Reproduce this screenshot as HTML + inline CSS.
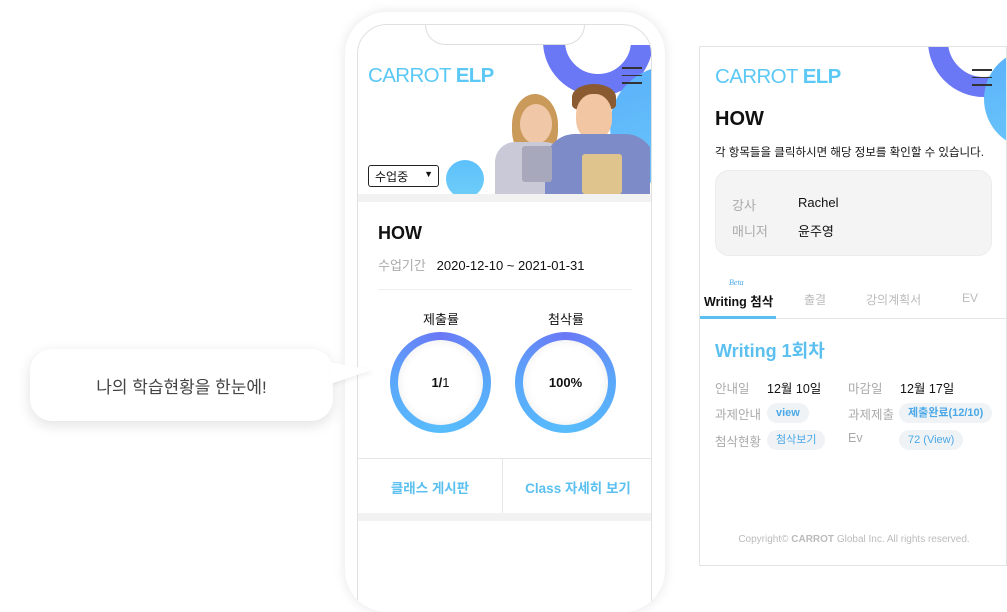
<!DOCTYPE html>
<html><head><meta charset="utf-8"><style>
*{margin:0;padding:0;box-sizing:border-box}
body{width:1007px;height:563px;overflow:hidden;background:#fff;position:relative;font-family:"Liberation Sans","Noto Sans CJK KR",sans-serif;color:#111}
.abs{position:absolute}
.logo{font-size:20.5px;color:#5bc8f5;letter-spacing:-0.6px;white-space:nowrap}
.logo b{font-weight:700}
.ham span{display:block;width:20px;height:1.5px;background:#333;margin-bottom:6px}
.ring{border-radius:50%;background:conic-gradient(#6a78f6,#5aa8fb 25%,#58bdfc 50%,#5aa8fb 75%,#6a78f6)}
.pill{display:inline-block;background:#f0f3f6;border-radius:10px;padding:2px 9px;color:#4aa8e8;font-size:11px;font-weight:700}
.lab{color:#aaa;font-size:12.5px}
</style></head><body>

<div class="abs" style="left:30px;top:349px;width:303px;height:72px;background:#fff;border-radius:22px;box-shadow:0 4px 14px rgba(0,0,0,0.12);z-index:3;display:flex;align-items:center;justify-content:center;font-size:17px;color:#444">나의 학습현황을 한눈에!</div>
<div class="abs" style="left:330px;top:362px;width:0;height:0;border-top:8px solid transparent;border-bottom:14px solid transparent;border-left:42px solid #fff;z-index:4;filter:drop-shadow(2px 2px 2px rgba(0,0,0,0.06))"></div>

<div class="abs" style="left:345px;top:12px;width:320px;height:600px;background:#fff;border-radius:42px;box-shadow:0 0 12px rgba(0,0,0,0.1);overflow:hidden">
  <div class="abs" style="left:12px;top:12px;width:295px;height:600px;border:1px solid #e0e0e0;border-radius:30px 30px 0 0;overflow:hidden;background:#fff">
    <div class="abs" style="left:0;top:20px;width:295px;height:149px;overflow:hidden">
      <div class="abs" style="left:185px;top:-59px;width:110px;height:110px;border-radius:50%;border:22px solid #6a78f6"></div>
      <div class="abs" style="left:252px;top:21px;width:120px;height:120px;border-radius:50%;background:linear-gradient(160deg,#5ab0fb,#6ccaf9)"></div>
      <div class="abs" style="left:88px;top:115px;width:38px;height:38px;border-radius:50%;background:linear-gradient(#5cc0fb,#6fcdf8)"></div>
      <div class="abs" style="left:132px;top:39px;width:160px;height:110px;overflow:hidden">
        <div class="abs" style="left:22px;top:10px;width:46px;height:62px;border-radius:50% 50% 40% 40%;background:#c99a5a"></div>
        <div class="abs" style="left:30px;top:20px;width:32px;height:40px;border-radius:50%;background:#f0c8a8"></div>
        <div class="abs" style="left:5px;top:58px;width:70px;height:60px;border-radius:20px 20px 0 0;background:#c9c9d8"></div>
        <div class="abs" style="left:82px;top:0px;width:44px;height:26px;border-radius:50% 50% 20% 20%;background:#8a5a30"></div>
        <div class="abs" style="left:86px;top:10px;width:36px;height:46px;border-radius:45%;background:#f2c6a2"></div>
        <div class="abs" style="left:55px;top:50px;width:110px;height:70px;border-radius:30px 30px 0 0;background:#7d8bc8"></div>
        <div class="abs" style="left:92px;top:70px;width:40px;height:40px;background:#e0c48e;border-radius:3px"></div>
        <div class="abs" style="left:32px;top:62px;width:30px;height:36px;background:#a8a8bc;border-radius:3px"></div>
      </div>
      <div class="abs logo" style="left:10px;top:19px">CARROT <b>ELP</b></div>
      <div class="abs ham" style="left:264px;top:22px"><span></span><span></span><span></span></div>
      <div class="abs" style="left:10px;top:120px;width:71px;height:22px;border:1px solid #222;border-radius:3px;font-size:12px;padding:2px 6px;background:#fff">수업중<span style="position:absolute;right:5px;top:3px;font-size:9px">▼</span></div>
    </div>
    <div class="abs" style="left:67px;top:-1px;width:160px;height:21px;background:#fff;border:1px solid #ddd;border-top:none;border-radius:0 0 20px 20px"></div>
    <div class="abs" style="left:0;top:169px;width:295px;height:8px;background:#f2f2f2"></div>
    <div class="abs" style="left:20px;top:198px;font-size:18px;font-weight:700">HOW</div>
    <div class="abs" style="left:20px;top:230px;font-size:13px;white-space:nowrap"><span style="color:#aaa">수업기간</span>&nbsp;&nbsp; 2020-12-10 ~ 2021-01-31</div>
    <div class="abs" style="left:20px;top:264px;width:254px;border-top:1px solid #eee"></div>
    <div class="abs" style="left:50px;top:284px;width:66px;text-align:center;font-size:13px">제출률</div>
    <div class="abs" style="left:175px;top:284px;width:66px;text-align:center;font-size:13px">첨삭률</div>
    <div class="abs ring" style="left:32px;top:307px;width:101px;height:101px"><div style="position:absolute;left:8px;top:8px;width:85px;height:85px;border-radius:50%;background:#fff;display:flex;align-items:center;justify-content:center;font-size:13px;font-weight:700;box-shadow:inset 0 0 10px rgba(0,0,0,0.08)">1/<span style="font-weight:400">1</span></div></div>
    <div class="abs ring" style="left:157px;top:307px;width:101px;height:101px"><div style="position:absolute;left:8px;top:8px;width:85px;height:85px;border-radius:50%;background:#fff;display:flex;align-items:center;justify-content:center;font-size:13px;font-weight:700;box-shadow:inset 0 0 10px rgba(0,0,0,0.08)">100%</div></div>
    <div class="abs" style="left:0;top:433px;width:295px;border-top:1px solid #e6e6e6"></div>
    <div class="abs" style="left:144px;top:433px;height:55px;border-left:1px solid #e6e6e6"></div>
    <div class="abs" style="left:0;top:452px;width:144px;text-align:center;color:#5bc0f0;font-size:13.5px;font-weight:700">클래스 게시판</div>
    <div class="abs" style="left:145px;top:452px;width:150px;text-align:center;color:#5bc0f0;font-size:13.5px;font-weight:700">Class 자세히 보기</div>
    <div class="abs" style="left:0;top:488px;width:295px;height:8px;background:#f2f2f2"></div>
  </div>
</div>

<div class="abs" style="left:699px;top:46px;width:308px;height:520px;border:1px solid #e3e3e3;overflow:hidden;background:#fff">
  <div class="abs" style="left:228px;top:-62px;width:112px;height:112px;border-radius:50%;border:20px solid #6a78f6"></div>
  <div class="abs" style="left:284px;top:2px;width:100px;height:100px;border-radius:50%;background:linear-gradient(160deg,#5ab0fb,#6ccaf9)"></div>
  <div class="abs logo" style="left:15px;top:18px">CARROT <b>ELP</b></div>
  <div class="abs ham" style="left:272px;top:22px"><span></span><span></span><span></span></div>
  <div class="abs" style="left:15px;top:61px;font-size:20px;font-weight:700">HOW</div>
  <div class="abs" style="left:15px;top:97px;font-size:11.5px;white-space:nowrap">각 항목들을 클릭하시면 해당 정보를 확인할 수 있습니다.</div>
  <div class="abs" style="left:15px;top:123px;width:277px;height:86px;background:#f4f4f4;border:1px solid #ececec;border-radius:14px"></div>
  <div class="abs lab" style="left:32px;top:148px;font-size:13px">강사</div>
  <div class="abs" style="left:98px;top:148px;font-size:13px">Rachel</div>
  <div class="abs lab" style="left:32px;top:174px;font-size:13px">매니저</div>
  <div class="abs" style="left:98px;top:174px;font-size:13px">윤주영</div>
  <div class="abs" style="left:29px;top:231px;font-size:8px;color:#4aa8e8;font-style:italic;font-family:'Liberation Serif',serif">Beta</div>
  <div class="abs" style="left:4px;top:244px;font-size:12.5px;font-weight:700">Writing 첨삭</div>
  <div class="abs" style="left:104px;top:244px;font-size:12px;color:#bbb">출결</div>
  <div class="abs" style="left:166px;top:244px;font-size:12px;color:#bbb">강의계획서</div>
  <div class="abs" style="left:262px;top:244px;font-size:12px;color:#bbb">EV</div>
  <div class="abs" style="left:0;top:271px;width:308px;border-top:1px solid #e6e6e6"></div>
  <div class="abs" style="left:0;top:269px;width:76px;height:3px;background:#5bc0f0"></div>
  <div class="abs" style="left:15px;top:290px;font-size:18px;font-weight:700;color:#5bc0f0">Writing 1회차</div>
  <div class="abs lab" style="left:15px;top:331px">안내일</div>
  <div class="abs" style="left:67px;top:331px;font-size:12.5px">12월 10일</div>
  <div class="abs lab" style="left:148px;top:331px">마감일</div>
  <div class="abs" style="left:200px;top:331px;font-size:12.5px">12월 17일</div>
  <div class="abs lab" style="left:15px;top:357px">과제안내</div>
  <div class="abs pill" style="left:67px;top:356px;line-height:16px">view</div>
  <div class="abs lab" style="left:148px;top:357px">과제제출</div>
  <div class="abs pill" style="left:199px;top:356px;line-height:16px">제출완료(12/10)</div>
  <div class="abs lab" style="left:15px;top:384px">첨삭현황</div>
  <div class="abs pill" style="left:67px;top:383px;line-height:16px;font-weight:400">첨삭보기</div>
  <div class="abs lab" style="left:148px;top:384px">Ev</div>
  <div class="abs pill" style="left:199px;top:383px;line-height:16px;font-weight:400">72 (View)</div>
  <div class="abs" style="left:0;top:487px;width:308px;text-align:center;font-size:10px;color:#bbb">Copyright© <b>CARROT</b> Global Inc. All rights reserved.</div>
</div>
</body></html>
